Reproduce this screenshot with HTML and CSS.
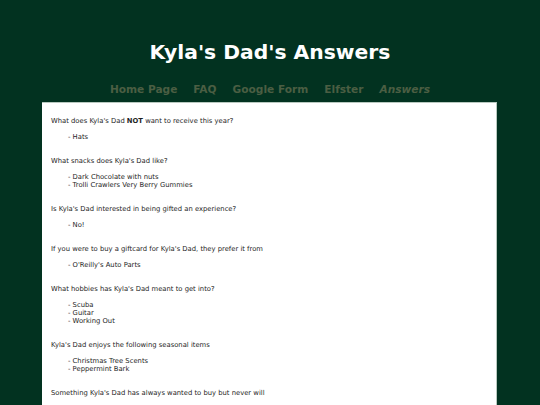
FILE: index.html
```html
<!DOCTYPE html>
<html>
<head>
<meta charset="utf-8">
<link rel="stylesheet" href="styles.css">
</head>
<body>
<header class="header">
  <h1 class="title">Kyla's Dad's Answers</h1>
  <nav class="nav">
    <a class="nav-link">Home Page</a>
    <a class="nav-link">FAQ</a>
    <a class="nav-link">Google Form</a>
    <a class="nav-link">Elfster</a>
    <a class="nav-link current">Answers</a>
  </nav>
</header>
<main class="content">
  <section class="qa">
    <p class="question">What does Kyla's Dad <b>NOT</b> want to receive this year?</p>
    <ul class="answers"><li>- Hats</li></ul>
  </section>
  <section class="qa">
    <p class="question">What snacks does Kyla's Dad like?</p>
    <ul class="answers"><li>- Dark Chocolate with nuts</li><li>- Trolli Crawlers Very Berry Gummies</li></ul>
  </section>
  <section class="qa">
    <p class="question">Is Kyla's Dad interested in being gifted an experience?</p>
    <ul class="answers"><li>- No!</li></ul>
  </section>
  <section class="qa">
    <p class="question">If you were to buy a giftcard for Kyla's Dad, they prefer it from</p>
    <ul class="answers"><li>- O'Reilly's Auto Parts</li></ul>
  </section>
  <section class="qa">
    <p class="question">What hobbies has Kyla's Dad meant to get into?</p>
    <ul class="answers"><li>- Scuba</li><li>- Guitar</li><li>- Working Out</li></ul>
  </section>
  <section class="qa">
    <p class="question">Kyla's Dad enjoys the following seasonal items</p>
    <ul class="answers"><li>- Christmas Tree Scents</li><li>- Peppermint Bark</li></ul>
  </section>
  <section class="qa">
    <p class="question">Something Kyla's Dad has always wanted to buy but never will</p>
  </section>
</main>
</body>
</html>
```
FILE: styles.css
```css
html, body {
  margin: 0;
  padding: 0;
  background: #023220;
  font-family: "DejaVu Sans", Verdana, sans-serif;
}
.header {
  display: flex;
  flex-direction: column;
  align-items: center;
  padding-top: 39px;
}
.title {
  margin: 0;
  color: #ffffff;
  font-size: 20.3px;
  font-weight: bold;
  line-height: 26px;
}
.nav {
  display: flex;
  gap: 16px;
  margin-top: 17px;
  height: 19px;
}
.nav-link {
  color: #4b5e43;
  font-size: 10.6px;
  font-weight: bold;
  line-height: 15px;
}
.current {
  font-style: italic;
}
.content {
  margin: 1px 43px 0 42px;
  background: #ffffff;
  border-top: 1px solid #b9c9c0;
  border-right: 1px solid #b9c9c0;
  padding: 14px 9px 20px 9px;
  color: #1e1e1e;
  font-size: 6.8px;
  line-height: 8px;
}
.qa {
  margin-bottom: 16px;
}
.qa:last-child {
  margin-bottom: 0;
}
.question {
  margin: 0;
}
.answers {
  list-style: none;
  margin: 8px 0 0 0;
  padding: 0 0 0 17px;
}
```
